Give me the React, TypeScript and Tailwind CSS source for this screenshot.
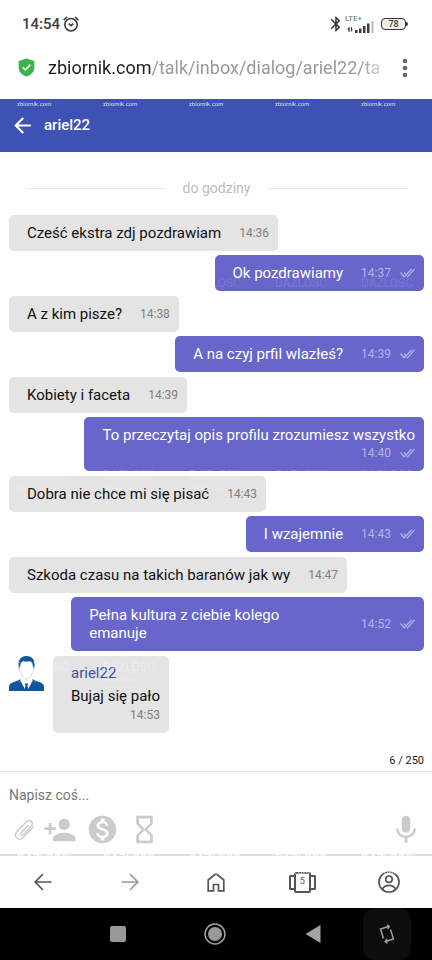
import { useState } from "react";
import type { ReactNode } from "react";
import { MdArrowBack, MdBluetooth, MdHourglassEmpty, MdMic, MdMonetizationOn, MdPersonAdd } from "react-icons/md";

type Message = {
  text: string;
  time: string;
  mine?: boolean;
  layout?: "stacked" | "wide";
};

// each exchange is a message and the answer to it
const exchanges: Message[][] = [
  [
    { text: "Cześć ekstra zdj pozdrawiam", time: "14:36" },
    { text: "Ok pozdrawiamy", time: "14:37", mine: true },
  ],
  [
    { text: "A z kim pisze?", time: "14:38" },
    { text: "A na czyj prfil wlazłeś?", time: "14:39", mine: true },
  ],
  [
    { text: "Kobiety i faceta", time: "14:39" },
    { text: "To przeczytaj opis profilu zrozumiesz wszystko", time: "14:40", mine: true, layout: "stacked" },
  ],
  [
    { text: "Dobra nie chce mi się pisać", time: "14:43" },
    { text: "I wzajemnie", time: "14:43", mine: true },
  ],
  [
    { text: "Szkoda czasu na takich baranów jak wy", time: "14:47" },
    { text: "Pełna kultura z ciebie kolego\nemanuje", time: "14:52", mine: true, layout: "wide" },
  ],
];

const layouts = {
  inline: "items-center gap-[18px]",
  stacked: "flex-col items-end",
  wide: "w-full items-center justify-between",
};

const watermarkRows = ["opacity-80", "opacity-10", "opacity-20", "opacity-30", "opacity-90"];

function Watermark() {
  return (
    <div
      aria-hidden="true"
      className="pointer-events-none absolute inset-0 overflow-hidden pt-[83px] text-white select-none"
    >
      {watermarkRows.map((opacity, row) => (
        <div key={row} className={`flex h-48 gap-[34px] pl-[17px] ${opacity}`}>
          {[0, 1, 2, 3, 4].map((col) => (
            <div key={col} className="w-[52px] shrink-0">
              <div className="text-[12px] leading-4">DAZLOSC</div>
              <div className="text-[6px] leading-[10px]">zbiornik.com</div>
            </div>
          ))}
        </div>
      ))}
    </div>
  );
}

function StatusBar() {
  return (
    <div className="flex h-12 items-center pr-6 pl-[22px] text-[#3c3c3c]">
      <span className="text-[15px] font-medium">14:54</span>
      <svg className="ml-[3px]" width="16" height="16" viewBox="0 0 16 16" fill="none" stroke="currentColor" strokeWidth="1.6">
        <circle cx="8" cy="8.700" r="6.200" />
        <path d="M5.700 7.700L8 9.700l2.300-2M.6 4.200L4 1M15.400 4.200L12 1" />
      </svg>
      <div className="ml-auto flex items-center">
        <MdBluetooth size={18} className="text-[#333]" />
        <div className="w-[32px]">
          <div className="text-[8px] leading-2 text-[#666]">LTE+</div>
          <svg className="-mt-[2px]" width="30" height="12" viewBox="0 0 30 12" fill="currentColor">
            <path d="M4 6L2 8.500h1.400V11h1.200V6zM6 6v5l2-2.500H7V6z" />
            <path d="M10 9h2.500v3H10zM14 7.500h2.500V12H14zM18 5h2.500v7H18zM22 2.500h2.500V12H22z" />
            <path d="M26.500 0h2v12h-2z" fill="#bbb" />
          </svg>
        </div>
        <div className="ml-1 flex h-3 w-[25px] items-center justify-center rounded-[4px] border border-[#333] bg-[#eee] text-[9px] leading-none font-medium">
          78
        </div>
        <div className="h-1 w-[2px] rounded-r bg-[#333]" />
      </div>
    </div>
  );
}

function AddressBar() {
  return (
    <div className="flex h-[51px] items-center pr-6 pb-3 pl-[18px]">
      <svg width="17" height="19" viewBox="0 0 17 19">
        <path d="M8.500.5L16.300 3v7c0 4-3.500 7.300-7.800 8.600C4.200 17.300.7 14 .7 10V3z" fill="#3cb34a" />
        <path d="M4.700 9.300l2.700 2.600 5-5.300" fill="none" stroke="#fff" strokeWidth="1.700" />
      </svg>
      <button className="ml-[13px] min-w-0 flex-1 mask-r-from-94% mask-r-to-104% text-left text-lg whitespace-nowrap text-[#999]">
        <span className="text-[#222]">zbiornik.com</span>/talk/inbox/dialog/ariel22/ta
      </button>
      <button aria-label="Menu" className="ml-[22px] text-[#666]">
        <svg width="6" height="20" viewBox="0 0 6 20" fill="currentColor">
          <circle cx="3" cy="3" r="2.300" />
          <circle cx="3" cy="10" r="2.300" />
          <circle cx="3" cy="17" r="2.300" />
        </svg>
      </button>
    </div>
  );
}

function Ticks() {
  return (
    <svg width="15" height="10" viewBox="0 0 15 10" fill="none" stroke="currentColor" strokeWidth="1.200">
      <path d="M.5 4.500L4.300 9M4 4.500l2 2.300M4.300 9L11.500 1M7 9.300L14.500 1" />
    </svg>
  );
}

function Bubble({ message }: { message: Message }) {
  const { text, time, mine, layout = "inline" } = message;
  return (
    <div
      className={`flex max-w-[85%] rounded-[5px] py-[9px] pr-[9px] pl-[18px] ${
        mine ? "self-end bg-[#6866cb] text-white" : "self-start bg-[#e4e4e4] text-[#111]"
      } ${layouts[layout]}`}
    >
      <p className="text-[15px] leading-[18px] whitespace-pre-line">{text}</p>
      <div
        className={`flex shrink-0 items-center gap-[9px] text-xs leading-[18px] ${
          mine ? "text-[#b5b4e6]" : "text-[#808080]"
        }`}
      >
        <time>{time}</time>
        {mine && <Ticks />}
      </div>
    </div>
  );
}

function Avatar() {
  return (
    <svg width="35" height="35" viewBox="0 0 35 35">
      <path d="M0 35v-4c0-3 2-4 5-5l7-3h11l7 3c3 1 5 2 5 5v4z" fill="#0f55a0" />
      <path d="M12 22l-.5 3 5.500 10h1l5.500-10-.5-3z" fill="#fff" />
      <path d="M15.500 27.500h4l-1 2 1 5.500h-4l1-5.500z" fill="#0f55a0" />
      <path d="M10 14C8 5 11 0 17.500 0S27 5 25 14z" fill="#0f55a0" />
      <path
        d="M11 11c.5-3 1.500-5.500 3.500-5.800 3 1 5.500.3 7 .3 1.700 1 2.300 3 2.500 5.500 1 0 1.300 1 .5 3-.5 1.500-1 1.500-1.300 2.500-1 4-3 6.500-5.700 6.500s-4.700-2.500-5.700-6.500c-.3-1-1-1-1.300-2.500-.6-2-.5-3 .5-3z"
        fill="#fff"
        stroke="#a9c3de"
        strokeWidth=".6"
      />
    </svg>
  );
}

function IconButton({ label, className = "", children }: { label: string; className?: string; children: ReactNode }) {
  return (
    <button aria-label={label} className={`flex items-center justify-center ${className}`}>
      {children}
    </button>
  );
}

function Composer() {
  const [draft, setDraft] = useState("");

  return (
    <footer>
      <div className="px-2 pb-[2px] text-right text-[11px] leading-4 text-[#222]">6 / 250</div>
      <div className="border-t border-[#e2e2e2] px-[9px] pt-[13px]">
        <input
          aria-label="Wiadomość"
          value={draft}
          onChange={(e) => setDraft(e.target.value)}
          maxLength={250}
          placeholder="Napisz coś..."
          className="block h-5 w-full text-sm outline-none placeholder:text-[#777]"
        />
        <div className="flex h-[49px] items-center text-[#cbcbcb]">
          <IconButton label="Załącz plik" className="w-[30px]">
            <svg width="22" height="24" viewBox="0 0 22 24" fill="none" stroke="currentColor" strokeWidth="1.400" strokeLinecap="round">
              <path d="M14.800 7.800l-7 7.500c-1.200 1.400.8 3.200 2.200 1.800l8.300-9c3-3.500-1.600-7.700-5-4.300l-9.500 10c-4 4.700 2 10.200 6.500 5.700l10-10.700" />
            </svg>
          </IconButton>
          <IconButton label="Dodaj osobę" className="ml-1">
            <MdPersonAdd size={34} />
          </IconButton>
          <IconButton label="Wyślij napiwek" className="ml-[9px]">
            <MdMonetizationOn size={33} />
          </IconButton>
          <IconButton label="Znikająca wiadomość" className="ml-[9px]">
            <MdHourglassEmpty size={33} />
          </IconButton>
          <IconButton label="Nagraj" className="ml-auto">
            <MdMic size={34} />
          </IconButton>
        </div>
      </div>
    </footer>
  );
}

function BrowserNav() {
  return (
    <nav className="grid h-[54px] grid-cols-5 border-t-2 border-[#dedede] text-[#555]">
      <IconButton label="Wstecz">
        <svg width="18" height="18" viewBox="0 0 18 18" fill="none" stroke="currentColor" strokeWidth="1.700">
          <path d="M17.500 9H1.500M9 1L1.200 9 9 17" />
        </svg>
      </IconButton>
      <IconButton label="Dalej" className="text-[#999]">
        <svg width="18" height="18" viewBox="0 0 18 18" fill="none" stroke="currentColor" strokeWidth="1.700">
          <path d="M.5 9h16M9 1l7.800 8L9 17" />
        </svg>
      </IconButton>
      <IconButton label="Strona główna">
        <svg width="18" height="20" viewBox="0 0 18 20" fill="none" stroke="currentColor" strokeWidth="1.700">
          <path d="M1.200 8L9 1.500 16.800 8v10.800h-5.300v-6.300h-5v6.300H1.200z" />
        </svg>
      </IconButton>
      <IconButton label="Karty">
        <span className="h-[15px] w-[5px] rounded-l-[2px] border-2 border-r-0 border-current" />
        <span className="flex h-[21px] w-[17px] items-center justify-center rounded-[2px] border-2 border-current text-[9px]">
          5
        </span>
        <span className="h-[15px] w-[5px] rounded-r-[2px] border-2 border-l-0 border-current" />
      </IconButton>
      <IconButton label="Profil">
        <svg width="22" height="22" viewBox="0 0 22 22" fill="none" stroke="currentColor" strokeWidth="1.700">
          <circle cx="11" cy="11" r="10" />
          <circle cx="11" cy="8.200" r="3.200" />
          <path d="M4.500 18c1.500-2.600 4-3.700 6.500-3.700s5 1.100 6.500 3.700" />
        </svg>
      </IconButton>
    </nav>
  );
}

function SystemNav() {
  return (
    <div className="flex h-[52px] items-center justify-end bg-black pr-[21px] text-[#a3a3a3]">
      <IconButton label="Ostatnie" className="mr-[77px]">
        <span className="size-4 rounded-[2px] bg-[#999]" />
      </IconButton>
      <IconButton label="Ekran główny" className="mr-[78px]">
        <svg width="24" height="24" viewBox="0 0 24 24">
          <circle cx="12" cy="12" r="10" fill="none" stroke="currentColor" strokeWidth="1.500" />
          <circle cx="12" cy="12" r="7" fill="#999" />
        </svg>
      </IconButton>
      <IconButton label="Cofnij" className="mr-[42px]">
        <svg width="16" height="20" viewBox="0 0 16 20" fill="currentColor">
          <path d="M15.500 1v18L.5 10z" />
        </svg>
      </IconButton>
      <IconButton label="Obróć ekran" className="h-full w-12 rounded-xl bg-[#0d0d0d]">
        <svg width="16" height="20" viewBox="0 0 16 20" fill="none" stroke="currentColor" strokeWidth="1.400">
          <path d="M4.500 14.500L1.500 5l8-2.500M8 .7l2.300 1.700L8.800 5M11.500 5.500l3 9.500-8 2.500M8 15l-1.800 2.600L8.500 19.300" />
        </svg>
      </IconButton>
    </div>
  );
}

export default function App() {
  return (
    <div className="relative flex min-h-screen flex-col bg-[#fefefe] font-['Roboto',sans-serif]">
      <StatusBar />
      <AddressBar />

      <header className="flex h-[53px] items-center bg-[#3e51b5] pl-[10px] text-white">
        <IconButton label="Wróć">
          <MdArrowBack size={25} />
        </IconButton>
        <h1 className="ml-[9px] text-[15px] font-medium">ariel22</h1>
      </header>

      <main className="flex flex-1 flex-col gap-[5px] pt-[26px] pr-2 pb-5 pl-[9px]">
        <div className="mb-3 flex items-center gap-[18px] px-[17px] text-sm leading-5 text-[#bcbcbc]">
          <div className="h-px flex-1 bg-[#e6e6e6]" />
          do godziny
          <div className="h-px flex-1 bg-[#e6e6e6]" />
        </div>

        {exchanges.map((messages, i) => (
          <div key={i} className="flex flex-col gap-1">
            {messages.map((m) => (
              <Bubble key={m.text} message={m} />
            ))}
          </div>
        ))}

        <div className="flex items-start gap-[9px]">
          <Avatar />
          <div className="rounded-[5px] bg-[#e4e4e4] pt-2 pr-[9px] pb-2 pl-[18px]">
            <a href="#ariel22" className="block text-[15px] leading-[18px] text-[#3e51a5]">
              ariel22
            </a>
            <p className="mt-[5px] text-[15px] leading-[18px] text-[#111]">Bujaj się pało</p>
            <time className="block text-right text-xs leading-5 text-[#808080]">14:53</time>
          </div>
        </div>
      </main>

      <Composer />
      <BrowserNav />
      <SystemNav />
      <Watermark />
    </div>
  );
}
